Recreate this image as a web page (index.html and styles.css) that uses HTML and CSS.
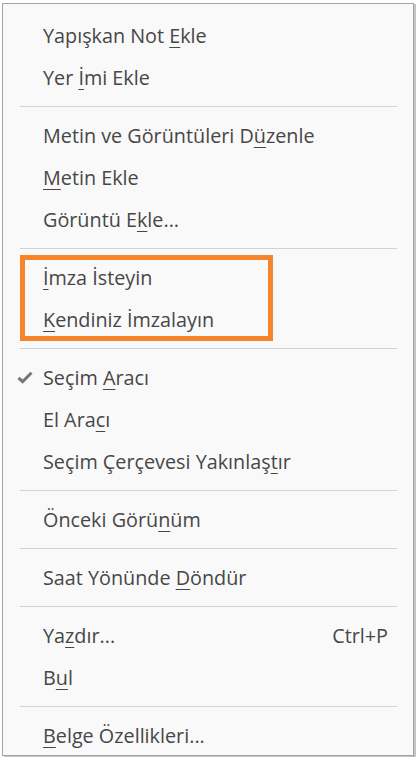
FILE: index.html
```html
<!DOCTYPE html>
<html lang="tr">
<head>
<meta charset="utf-8">
<title>Menü</title>
<link rel="stylesheet" href="styles.css">
</head>
<body>
<div class="menu">
  <div class="item"><span class="label">Yapışkan Not <u>E</u>kle</span></div>
  <div class="item"><span class="label">Yer <u>İ</u>mi Ekle</span></div>
  <div class="sep"></div>
  <div class="item"><span class="label">Metin ve Görüntüleri D<u>ü</u>zenle</span></div>
  <div class="item"><span class="label"><u>M</u>etin Ekle</span></div>
  <div class="item"><span class="label">Görüntü E<u>k</u>le...</span></div>
  <div class="sep"></div>
  <div class="group highlight">
    <div class="item"><span class="label"><u>İ</u>mza İsteyin</span></div>
    <div class="item"><span class="label"><u>K</u>endiniz İmzalayın</span></div>
  </div>
  <div class="sep"></div>
  <div class="item checked">
    <svg class="check" viewBox="0 0 16 13" width="16" height="13" aria-hidden="true"><path d="M1.5 6.8 L5.6 10.6 L14.5 1.8" fill="none" stroke="#767676" stroke-width="3" stroke-linecap="butt" stroke-linejoin="miter"/></svg>
    <span class="label">Seçim <u>A</u>racı</span>
  </div>
  <div class="item"><span class="label">El Ara<u>c</u>ı</span></div>
  <div class="item"><span class="label">Seçim Çerçevesi Yakınlaş<u>t</u>ır</span></div>
  <div class="sep"></div>
  <div class="item"><span class="label">Önceki Görü<u>n</u>üm</span></div>
  <div class="sep"></div>
  <div class="item"><span class="label">Saat Yönünde <u>D</u>öndür</span></div>
  <div class="sep"></div>
  <div class="item"><span class="label">Ya<u>z</u>dır...</span><span class="shortcut">Ctrl+P</span></div>
  <div class="item"><span class="label">B<u>u</u>l</span></div>
  <div class="sep"></div>
  <div class="item"><span class="label"><u>B</u>elge Özellikleri...</span></div>
</div>
</body>
</html>
```
FILE: styles.css
```css
html, body {
  margin: 0;
  padding: 0;
  background: #ffffff;
}
body {
  font-family: "Open Sans", "Noto Sans", "DejaVu Sans", sans-serif;
  color: #474747;
  height: 759px;
  overflow: hidden;
}
.menu {
  margin: 3px 0 0 2px;
  width: 412px;
  height: 753px;
  background: #f9f9f9;
  border: 1px solid #a3a3a3;
  box-shadow: 2px 1px 0 #c4c4c4;
  padding-top: 11px;
  box-sizing: border-box;
  overflow: hidden;
}
.item {
  position: relative;
  display: flex;
  align-items: center;
  height: 42px;
  padding: 0 25px 2px 40px;
  box-sizing: border-box;
  font-size: 19.8px;
  white-space: nowrap;
}
.label {
  flex: 1;
}
.shortcut {
  flex: none;
}
u {
  text-decoration: underline;
  text-decoration-thickness: 1px;
  text-underline-offset: 4px;
}
.check {
  position: absolute;
  left: 14px;
  top: 14px;
}
.sep {
  height: 1px;
  background: #d2d2d2;
  margin: 7px 16px 8px 17px;
}
.group {
  position: relative;
}
.highlight::after {
  content: "";
  position: absolute;
  left: 17px;
  top: -2px;
  width: 253px;
  height: 86px;
  border: 5px solid #f5842a;
  box-sizing: border-box;
  pointer-events: none;
}
```
